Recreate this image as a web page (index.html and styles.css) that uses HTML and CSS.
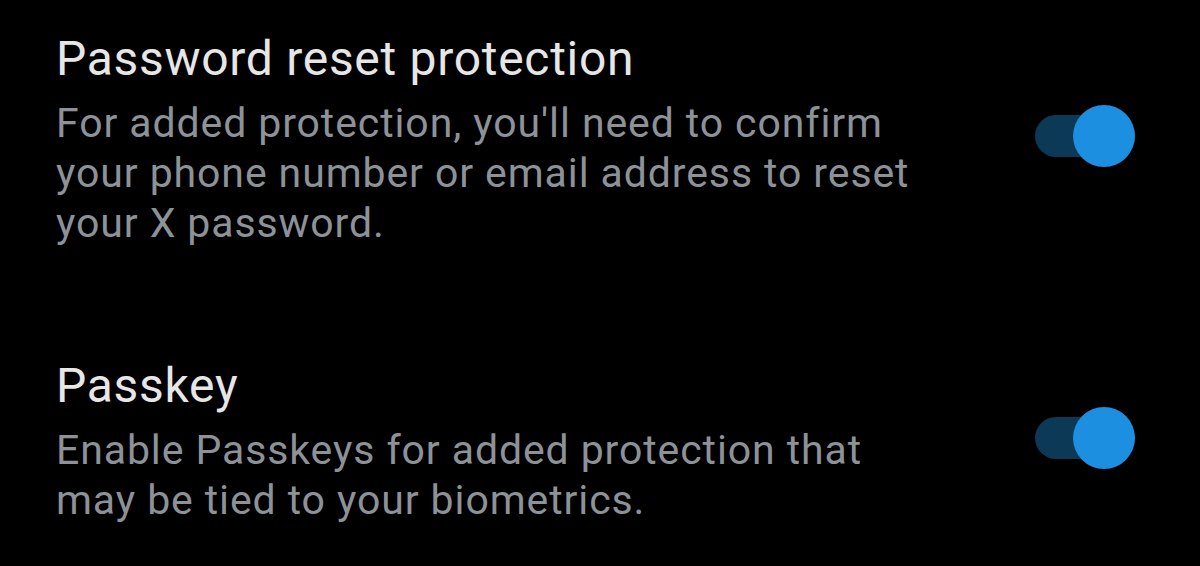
FILE: index.html
```html
<!DOCTYPE html>
<html>
<head>
<meta charset="utf-8">
<link rel="stylesheet" href="styles.css">
</head>
<body>
<div class="list">
  <div class="row">
    <div class="text">
      <div class="title">Password reset protection</div>
      <div class="desc">For added protection, you'll need to confirm<br>your phone number or email address to reset<br>your X password.</div>
    </div>
    <div class="toggle"><span class="knob"></span></div>
  </div>
  <div class="row second">
    <div class="text">
      <div class="title">Passkey</div>
      <div class="desc">Enable Passkeys for added protection that<br>may be tied to your biometrics.</div>
    </div>
    <div class="toggle"><span class="knob"></span></div>
  </div>
</div>
</body>
</html>
```
FILE: styles.css
```css
html, body {
  margin: 0;
  padding: 0;
  background: #000;
  width: 1200px;
  height: 566px;
  overflow: hidden;
}
body {
  font-family: Roboto, "Liberation Sans", sans-serif;
}
.list {
  display: flex;
  flex-direction: column;
  padding: 31px 65px 0 56px;
}
.row {
  display: flex;
  align-items: center;
  justify-content: space-between;
}
.second {
  margin-top: 110px;
}
.title {
  color: #e6e6e6;
  font-size: 48px;
  line-height: 56px;
  letter-spacing: 0.7px;
  margin-bottom: 11px;
}
.desc {
  color: #8c9297;
  font-size: 41px;
  line-height: 50px;
  letter-spacing: 0.9px;
}
.toggle {
  position: relative;
  width: 100px;
  height: 42px;
  margin-bottom: 7px;
  background: #0c3a56;
  border-radius: 21px;
}
.knob {
  position: absolute;
  right: 0;
  top: -10px;
  width: 62px;
  height: 62px;
  border-radius: 50%;
  background: #1d8fe0;
}
```
